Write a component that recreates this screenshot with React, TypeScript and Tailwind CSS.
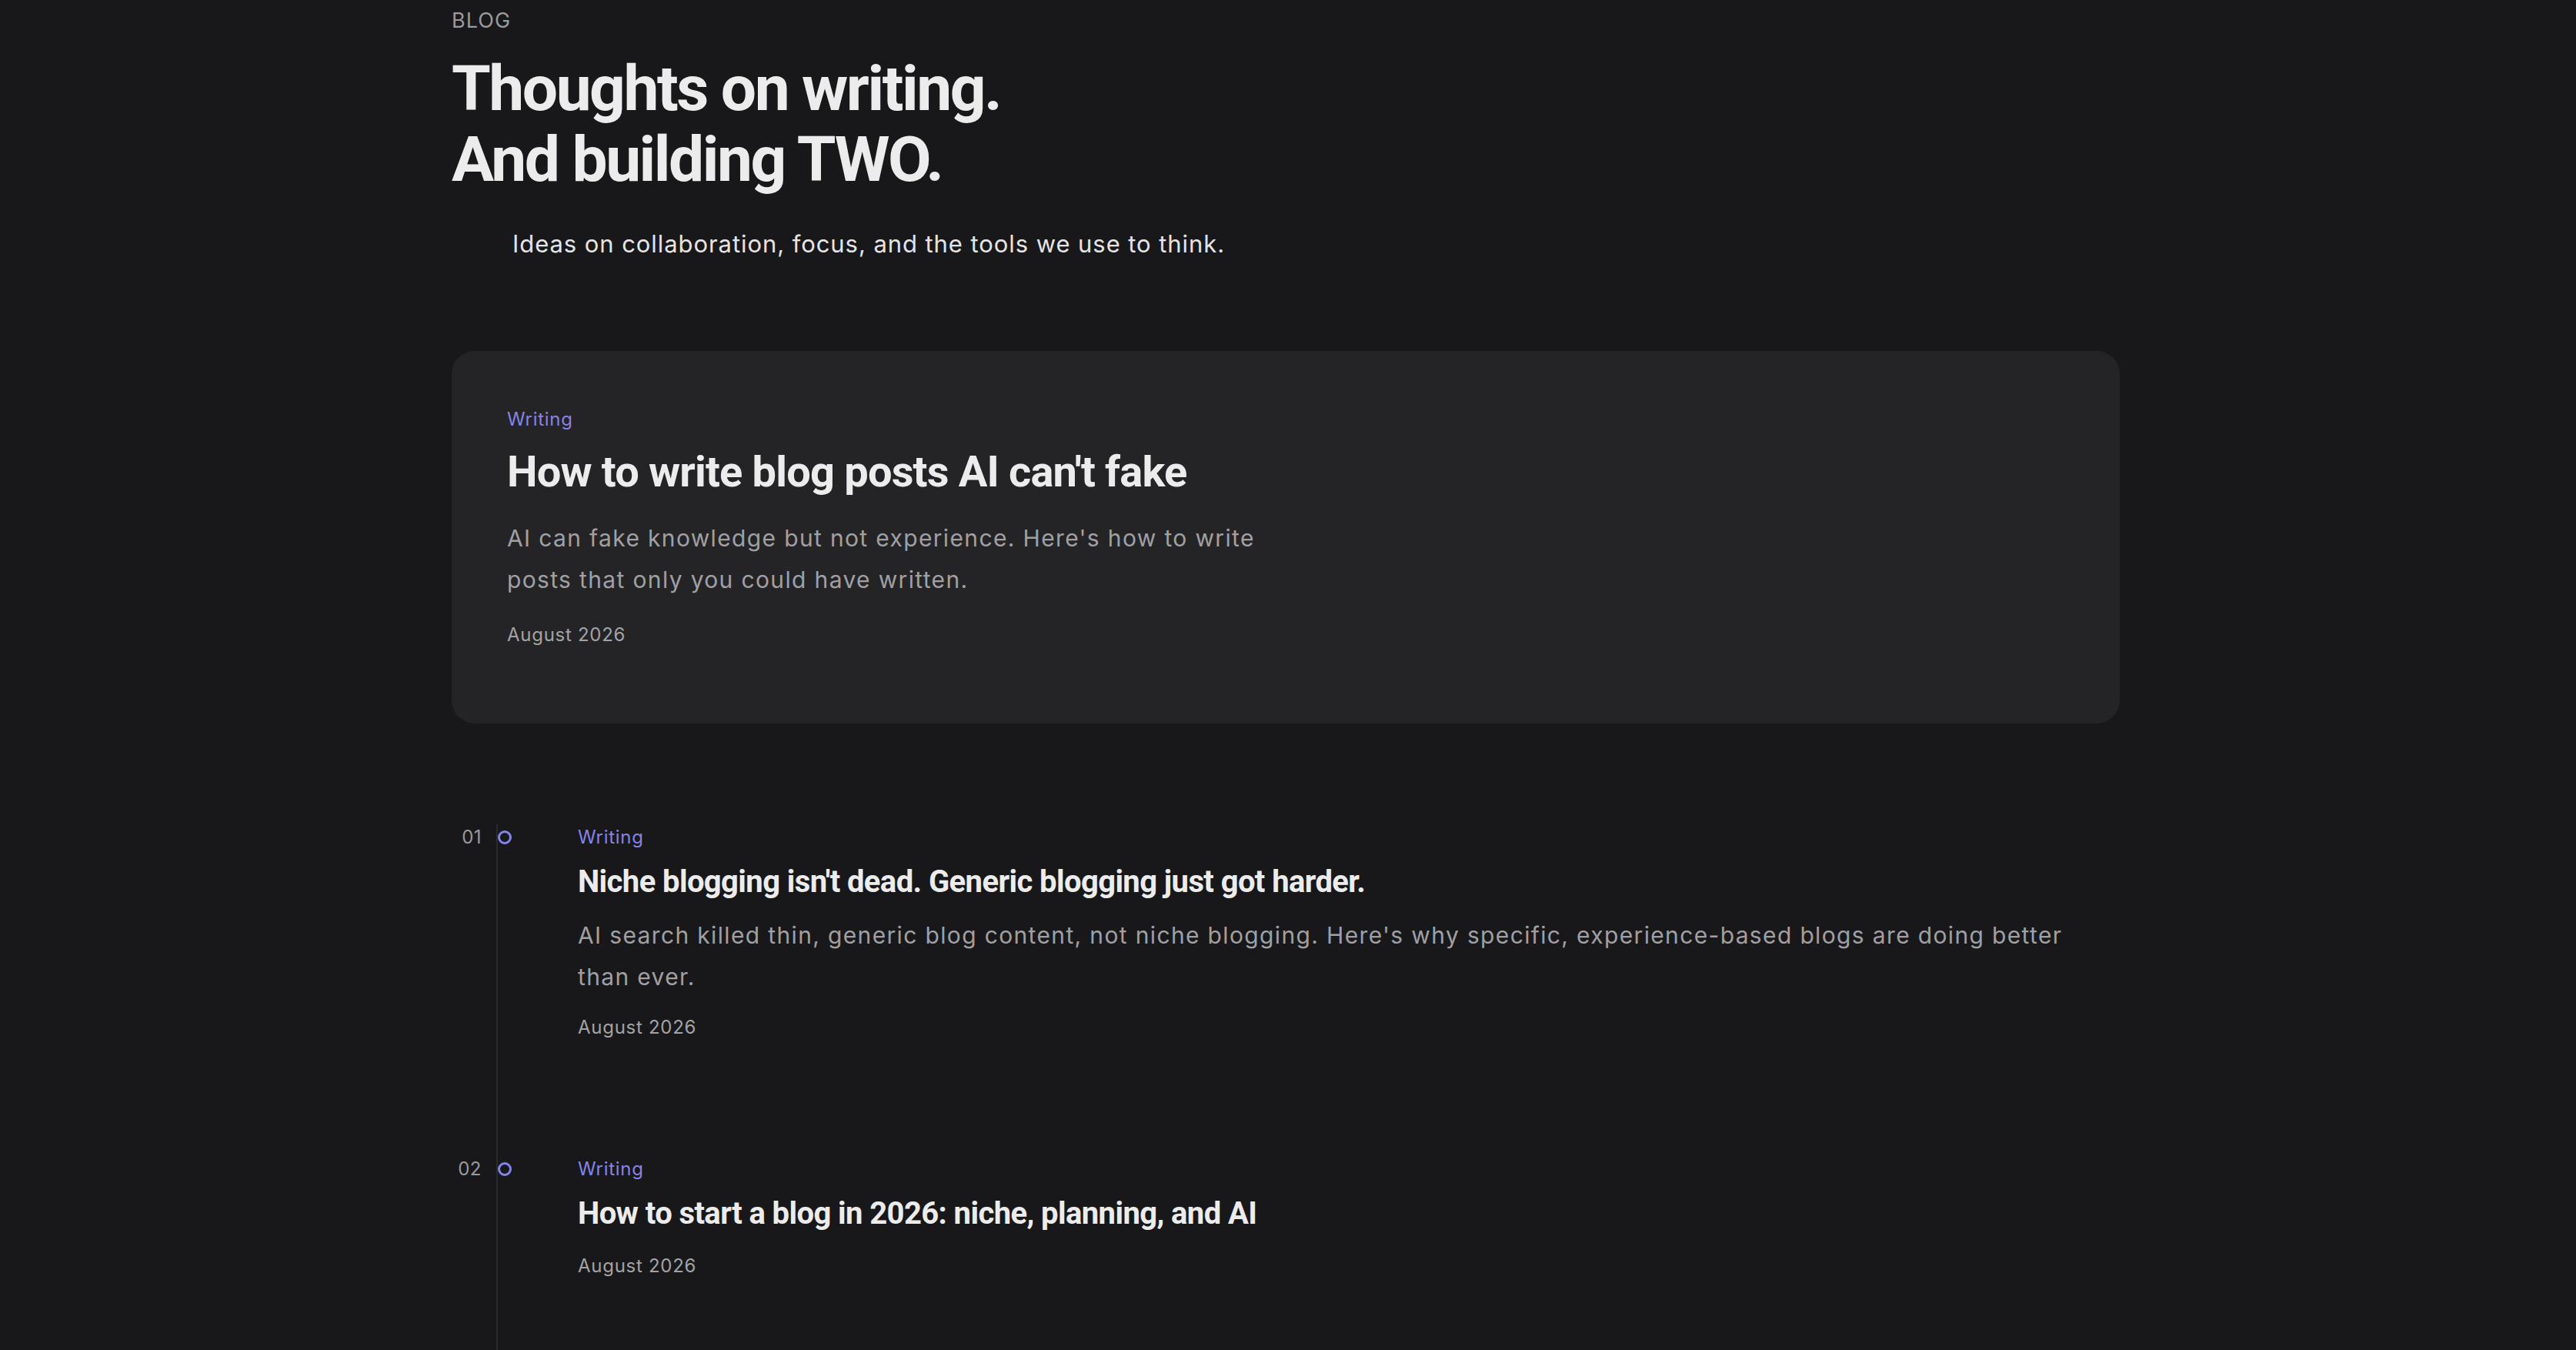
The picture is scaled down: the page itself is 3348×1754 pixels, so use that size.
type Post = {
  category: string
  title: string
  excerpt?: string
  date: string
}

const featured: Post = {
  category: 'Writing',
  title: "How to write blog posts AI can't fake",
  excerpt: "AI can fake knowledge but not experience. Here's how to write posts that only you could have written.",
  date: 'August 2026',
}

const posts: Post[] = [
  {
    category: 'Writing',
    title: "Niche blogging isn't dead. Generic blogging just got harder.",
    excerpt:
      "AI search killed thin, generic blog content, not niche blogging. Here's why specific, experience-based blogs are doing better than ever.",
    date: 'August 2026',
  },
  {
    category: 'Writing',
    title: 'How to start a blog in 2026: niche, planning, and AI',
    date: 'August 2026',
  },
]

function FeaturedCard({ post }: { post: Post }) {
  return (
    <a href="#" className="mt-[115px] block rounded-[30px] bg-[#242427] px-[72px] pt-[72px] pb-[98px]">
      <p className="text-[24px] leading-[34px] tracking-[0.03em] text-[#8583e8]">{post.category}</p>
      <h2 className="mt-[19px] font-[Roboto,sans-serif] text-[56px] leading-[64px] font-bold tracking-[-0.015em] text-[#ececec]">
        {post.title}
      </h2>
      <p className="mt-[27px] max-w-[1020px] text-[30px] leading-[54px] tracking-[0.045em] text-[#a0a0a4]">
        {post.excerpt}
      </p>
      <p className="mt-[28px] text-[24px] leading-[34px] tracking-[0.03em] text-[#a3a3a6]">{post.date}</p>
    </a>
  )
}

function TimelineItem({ post, index }: { post: Post; index: number }) {
  return (
    <li className="flex">
      {/* Number */}
      <span className="w-[39px] shrink-0 text-right text-[24px] leading-[34px] tracking-[0.02em] text-[#9a9a9d]">
        {String(index + 1).padStart(2, '0')}
      </span>

      {/* Rail */}
      <div className="ml-[19px] w-[106px] shrink-0 border-l-2 border-[#2a2a2e]">
        <div className="mt-[8px] h-[18px] w-[18px] rounded-full border-[3px] border-[#8583e8]" />
      </div>

      {/* Content */}
      <div className="max-w-[1960px] pb-[150px]">
        <p className="text-[24px] leading-[34px] tracking-[0.03em] text-[#8583e8]">{post.category}</p>
        <h3 className="mt-[17px] font-[Roboto,sans-serif] text-[40px] leading-[48px] font-bold tracking-[-0.015em] text-[#ececec]">
          {post.title}
        </h3>
        {post.excerpt && (
          <p className="mt-[18px] text-[30px] leading-[54px] tracking-[0.045em] text-[#a0a0a4]">{post.excerpt}</p>
        )}
        <p
          className={
            post.excerpt
              ? 'mt-[22px] text-[24px] leading-[34px] tracking-[0.03em] text-[#a3a3a6]'
              : 'mt-[27px] text-[24px] leading-[34px] tracking-[0.03em] text-[#a3a3a6]'
          }
        >
          {post.date}
        </p>
      </div>
    </li>
  )
}

export default function App() {
  return (
    <div className="h-[1754px] overflow-hidden bg-[#18181b] font-[Inter,sans-serif]">
      <main className="ml-[587px] w-[2168px] pt-[6px]">
        <p className="text-[27px] leading-[42px] tracking-[0.04em] text-[#9a9a9d]">BLOG</p>
        <h1 className="mt-[21px] font-[Roboto,sans-serif] text-[82px] leading-[92px] font-bold tracking-[-0.03em] text-[#ececec]">
          Thoughts on writing.
          <br />
          And building TWO.
        </h1>
        <p className="mt-[40px] ml-[79px] text-[31px] leading-[48px] tracking-[0.03em] text-[#e4e4e6]">
          Ideas on collaboration, focus, and the tools we use to think.
        </p>

        <FeaturedCard post={featured} />

        <ol className="mt-[131px]">
          {posts.map((post, i) => (
            <TimelineItem key={post.title} post={post} index={i} />
          ))}
        </ol>
      </main>
    </div>
  )
}
